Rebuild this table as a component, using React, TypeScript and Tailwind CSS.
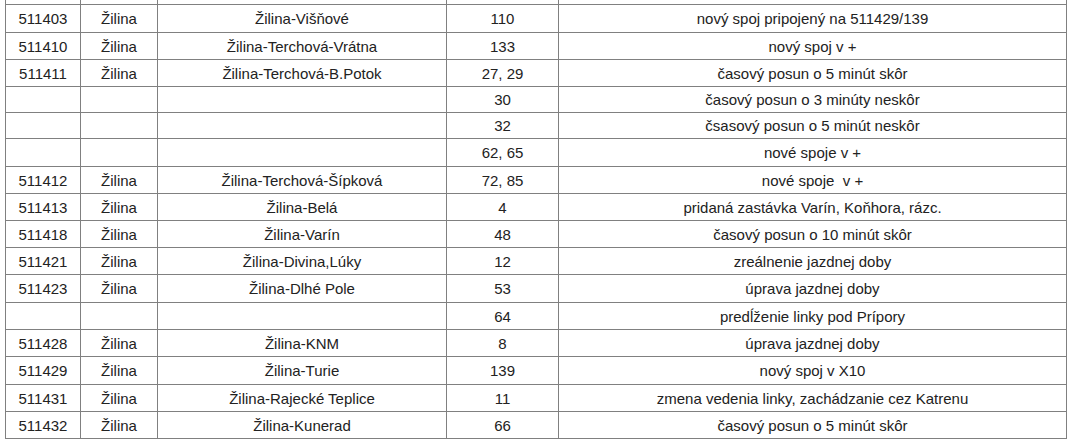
import React from "react";

type Row = { h: string; c: [string, string, string, string, string] };

const rows: Row[] = [
  { h: "h-[28px]", c: ["511403", "Žilina", "Žilina-Višňové", "110", "nový spoj pripojený na 511429/139"] },
  { h: "h-[27px]", c: ["511410", "Žilina", "Žilina-Terchová-Vrátna", "133", "nový spoj v +"] },
  { h: "h-[27px]", c: ["511411", "Žilina", "Žilina-Terchová-B.Potok", "27, 29", "časový posun o 5 minút skôr"] },
  { h: "h-[26px]", c: ["", "", "", "30", "časový posun o 3 minúty neskôr"] },
  { h: "h-[26px]", c: ["", "", "", "32", "čsasový posun o 5 minút neskôr"] },
  { h: "h-[28px]", c: ["", "", "", "62, 65", "nové spoje v +"] },
  { h: "h-[27px]", c: ["511412", "Žilina", "Žilina-Terchová-Šípková", "72, 85", "nové spoje\u00a0 v +"] },
  { h: "h-[27px]", c: ["511413", "Žilina", "Žilina-Belá", "4", "pridaná zastávka Varín, Koňhora, rázc."] },
  { h: "h-[27px]", c: ["511418", "Žilina", "Žilina-Varín", "48", "časový posun o 10 minút skôr"] },
  { h: "h-[27px]", c: ["511421", "Žilina", "Žilina-Divina,Lúky", "12", "zreálnenie jazdnej doby"] },
  { h: "h-[28px]", c: ["511423", "Žilina", "Žilina-Dlhé Pole", "53", "úprava jazdnej doby"] },
  { h: "h-[27px]", c: ["", "", "", "64", "predĺženie linky pod Prípory"] },
  { h: "h-[27px]", c: ["511428", "Žilina", "Žilina-KNM", "8", "úprava jazdnej doby"] },
  { h: "h-[28px]", c: ["511429", "Žilina", "Žilina-Turie", "139", "nový spoj v X10"] },
  { h: "h-[27px]", c: ["511431", "Žilina", "Žilina-Rajecké Teplice", "11", "zmena vedenia linky, zachádzanie cez Katrenu"] },
  { h: "h-[27px]", c: ["511432", "Žilina", "Žilina-Kunerad", "66", "časový posun o 5 minút skôr"] },
];

const widths = ["w-[75px]", "w-[77px]", "w-[289px]", "w-[112px]", "w-[508px]"];

function Cells({ c }: { c: string[] }) {
  return (
    <>
      {c.map((t, i) => (
        <div
          key={i}
          className={`${widths[i]} shrink-0 h-full border-r border-[#808080] flex items-center justify-center whitespace-pre`}
        >
          {t}
        </div>
      ))}
    </>
  );
}

export default function App() {
  return (
    <div className="w-[1071px] h-[447px] bg-white overflow-hidden text-[15px] text-[#222] font-['Liberation_Sans',Arial,sans-serif] leading-none">
      <div className="ml-[5px] w-[1062px] border-l border-[#808080]">
        <div className="flex h-[5px] border-b border-[#808080]">
          <Cells c={["", "", "", "", ""]} />
        </div>
        {rows.map((r, i) => (
          <div key={i} className={`flex ${r.h} border-b border-[#808080]`}>
            <Cells c={r.c} />
          </div>
        ))}
      </div>
    </div>
  );
}
